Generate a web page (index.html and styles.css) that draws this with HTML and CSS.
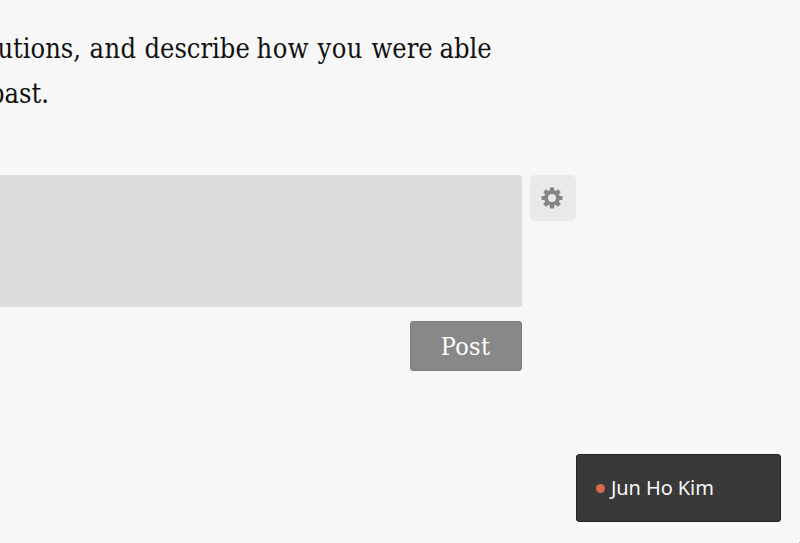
FILE: index.html
```
<!DOCTYPE html>
<html lang="en">
<head>
<meta charset="utf-8">
<title>Discussion</title>
<link rel="stylesheet" href="styles.css">
</head>
<body>
<main class="page">
  <div class="prompt">
    <p class="line line-first"><span class="tail">utions,</span><span class="wide">and</span><span>describe</span><span class="wide">how</span><span class="wide">you</span><span>were</span><span>able</span></p>
    <p class="line line-last"><span>past.</span></p>
  </div>
  <div class="composer">
    <div class="editor"></div>
    <div class="settings">
      <svg class="gear" viewBox="-11 -11 22 22" aria-hidden="true">
        <g fill="#858585">
          <g id="teeth"><rect x="-2.1" y="-10.5" width="4.2" height="21" rx=".8"/><rect x="-10.5" y="-2.1" width="21" height="4.2" rx=".8"/></g>
          <use href="#teeth" transform="rotate(45)"/>
        </g>
        <circle r="6" fill="#e9e9e9" stroke="#858585" stroke-width="3.8"/>
      </svg>
    </div>
  </div>
  <div class="post"><span>Post</span></div>
  <div class="user"><i class="dot"></i><span class="name">Jun Ho Kim</span></div>
  <i class="corner"></i>
</main>
</body>
</html>
```
FILE: styles.css
```
* { box-sizing: border-box; }
body { margin: 0; background: #f7f7f7; }
.page {
  position: relative;
  width: 800px;
  height: 543px;
  overflow: hidden;
  display: flex;
  flex-direction: column;
  padding-top: 26px;
}
.prompt {
  height: 149px;
  font: 27px/45px "DejaVu Serif Condensed", "DejaVu Serif", serif;
  font-stretch: condensed;
  color: #111;
}
.line { margin: 0; letter-spacing: 0; white-space: nowrap; }
.line-first {
  display: grid;
  grid-template-columns: 81px 55px 112px 61px 54px 68px 52px;
  width: 492px;
}
.line-first span:nth-child(n+2) { margin-left: 8.5px; }
.wide { letter-spacing: .5px; }
.tail { justify-self: end; }
.line-last { display: flex; justify-content: flex-end; width: 49px; }
.composer { display: flex; gap: 8px; }
.editor { width: 521.5px; height: 132px; background: #ddd; border-radius: 0 3px 3px 0; }
.settings {
  width: 46px;
  height: 46px;
  border-radius: 5px;
  background: #e9e9e9;
  display: flex;
  align-items: center;
  justify-content: center;
}
.gear { width: 22px; height: 22px; margin-right: 1px; }
.post {
  width: 112px;
  height: 50px;
  margin: 14px 0 0 409.5px;
  border: 1px solid #7d7d7d;
  border-radius: 3px;
  background: #888;
  color: #fff;
  font: 25px/49px "DejaVu Serif Condensed", "DejaVu Serif", serif;
  font-stretch: condensed;
  letter-spacing: .3px;
  text-align: center;
}
.user {
  width: 205px;
  height: 68px;
  margin: 83.4px 0 0 576px;
  padding-left: 19px;
  border: 1px solid #242424;
  border-radius: 3px;
  background: #393939;
  display: flex;
  align-items: center;
  gap: 6px;
}
.dot { width: 9px; height: 9px; border-radius: 50%; background: #dc6751; margin-top: 1px; }
.name { color: #f7f7f7; font: 20px/28px "Noto Sans", sans-serif; letter-spacing: -.1px; }
.corner { position: absolute; right: 0; bottom: 0; width: 1px; height: 1px; background: #aaa; }
```
